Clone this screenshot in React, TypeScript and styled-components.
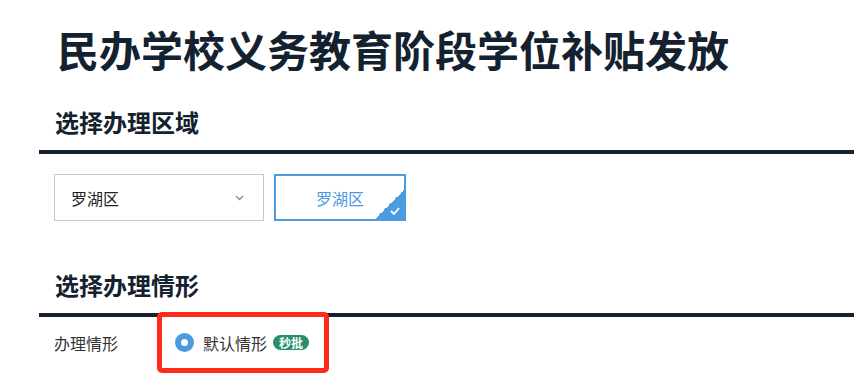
import styled, { createGlobalStyle } from "styled-components";

const GlobalStyle = createGlobalStyle`
  html, body {
    margin: 0;
    padding: 0;
    background: #fff;
    font-family: "Noto Sans CJK SC", "Noto Sans", sans-serif;
  }
`;

const Page = styled.div`
  width: 854px;
  height: 391px;
  overflow: hidden;
`;

const Title = styled.h1`
  margin: 21px 0 0 57px;
  font-size: 42px;
  line-height: 56px;
  font-weight: 700;
  color: #14212f;
  letter-spacing: 0;
`;

const Section = styled.section`
  margin-left: 39px;
`;

const SectionTitle = styled.h2<{ $top: number }>`
  margin: ${(p) => p.$top}px 0 0;
  padding: 0 0 12px 16px;
  font-size: 24px;
  line-height: 32px;
  font-weight: 700;
  color: #14212f;
  border-bottom: 4px solid #14212f;
`;

const Row = styled.div<{ $top: number }>`
  display: flex;
  align-items: center;
  gap: 10px;
  margin-top: ${(p) => p.$top}px;
  padding-left: 15px;
`;

const Select = styled.div`
  box-sizing: border-box;
  width: 210px;
  height: 47px;
  border: 1px solid #c8c8c8;
  display: flex;
  align-items: center;
  justify-content: space-between;
  padding: 0 19px 0 16px;
  font-size: 16px;
  color: #222;
`;

const RegionButton = styled.div`
  position: relative;
  box-sizing: border-box;
  width: 132px;
  height: 47px;
  border: 2px solid #4a9be0;
  display: flex;
  align-items: center;
  justify-content: center;
  font-size: 16px;
  color: #4a9be0;
  overflow: hidden;
`;

const Corner = styled.div`
  position: absolute;
  right: 0;
  bottom: 0;
  width: 29px;
  height: 29px;
  background: linear-gradient(135deg, transparent 50%, #4a9be0 50%);
`;

const CheckIcon = styled.svg`
  position: absolute;
  right: 4px;
  bottom: 4px;
`;

const Label = styled.div`
  width: 93px;
  font-size: 16px;
  color: #333;
`;

const OptionBox = styled.div`
  position: relative;
  box-sizing: border-box;
  height: 61px;
  width: 172px;
  display: flex;
  align-items: center;
  padding-left: 18px;
  gap: 9px;
`;

const Highlight = styled.div`
  position: absolute;
  inset: 0;
  border: 5px solid #ff2a1a;
  border-radius: 5px;
  pointer-events: none;
`;

const Radio = styled.span`
  box-sizing: border-box;
  width: 19px;
  height: 19px;
  border-radius: 50%;
  border: 6px solid #4a9be0;
  background: #fff;
  flex: none;
`;

const OptionText = styled.span`
  font-size: 16px;
  color: #333;
`;

const Badge = styled.span`
  margin-left: -3px;
  height: 15px;
  padding: 0 6px;
  border-radius: 8px;
  background: #25906b;
  color: #fff;
  font-size: 12px;
  line-height: 15px;
  font-weight: 700;
`;

export default function App() {
  return (
    <Page>
      <GlobalStyle />
      <Title>民办学校义务教育阶段学位补贴发放</Title>

      <Section>
        <SectionTitle $top={29}>选择办理区域</SectionTitle>
      </Section>
      <Section>
        <Row $top={20}>
          <Select>
            <span>罗湖区</span>
            <svg width="9" height="6" viewBox="0 0 9 6">
              <polyline points="1,1 4.5,4.5 8,1" fill="none" stroke="#888" strokeWidth="1.3" />
            </svg>
          </Select>
          <RegionButton>
            罗湖区
            <Corner />
            <CheckIcon width="10" height="8" viewBox="0 0 10 8">
              <polyline points="1,4 4,7 9,1" fill="none" stroke="#fff" strokeWidth="1.8" />
            </CheckIcon>
          </RegionButton>
        </Row>
      </Section>

      <Section>
        <SectionTitle $top={48}>选择办理情形</SectionTitle>
      </Section>
      <Section>
        <Row $top={-5}>
          <Label>办理情形</Label>
          <OptionBox>
            <Radio />
            <OptionText>默认情形</OptionText>
            <Badge>秒批</Badge>
            <Highlight />
          </OptionBox>
        </Row>
      </Section>
    </Page>
  );
}
